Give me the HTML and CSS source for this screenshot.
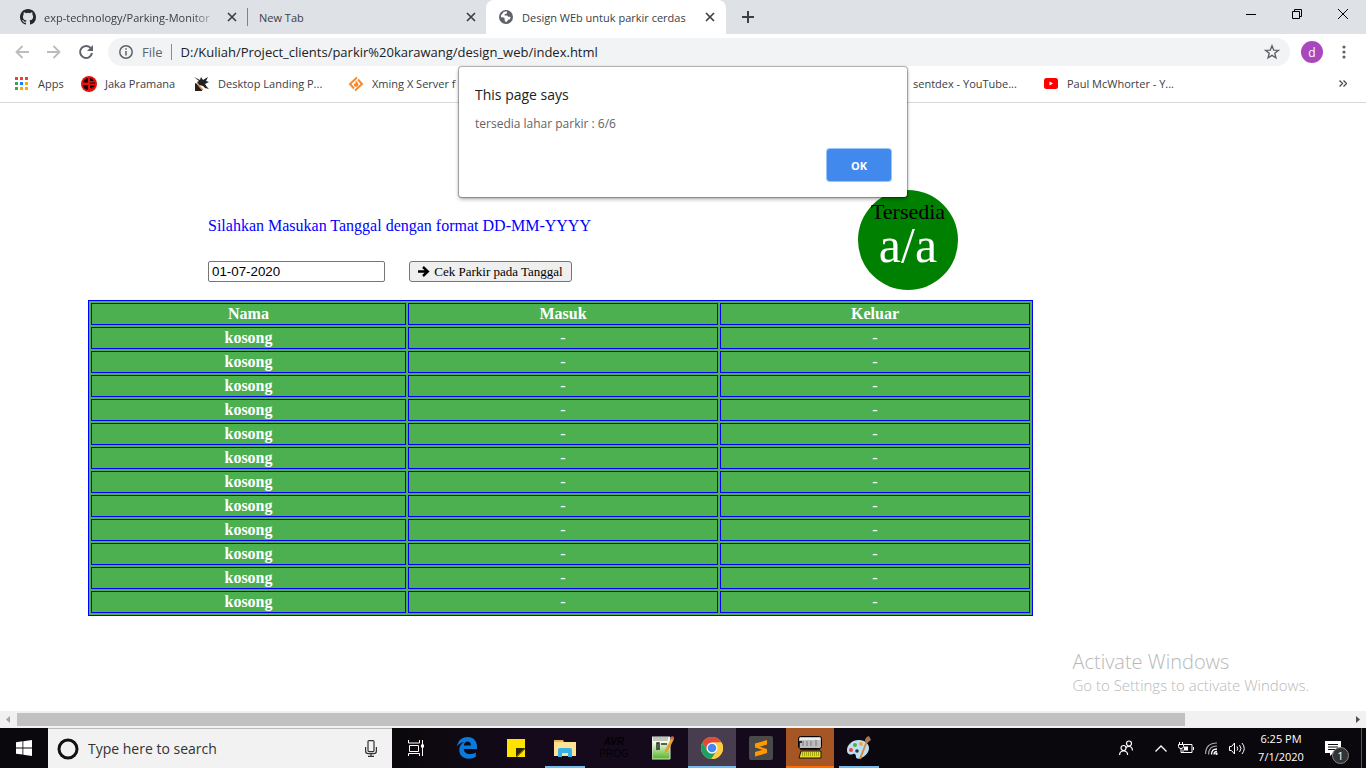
FILE: index.html
```html
<!DOCTYPE html>
<html lang="id">
<head>
<meta charset="utf-8">
<title>Design WEb untuk parkir cerdas</title>
<link rel="stylesheet" href="styles.css">
</head>
<body>
<div class="screen">
  <header class="browser">
    <div class="tabs">
      <div class="tab tab-first">
        <svg width="16" height="16" viewBox="0 0 16 16" fill="#24292e"><path d="M8 0C3.58 0 0 3.58 0 8c0 3.54 2.29 6.53 5.47 7.59.4.07.55-.17.55-.38 0-.19-.01-.82-.01-1.49-2.01.37-2.53-.49-2.69-.94-.09-.23-.48-.94-.82-1.13-.28-.15-.68-.52-.01-.53.63-.01 1.08.58 1.23.82.72 1.21 1.87.87 2.33.66.07-.52.28-.87.51-1.07-1.78-.2-3.64-.89-3.64-3.95 0-.87.31-1.59.82-2.15-.08-.2-.36-1.02.08-2.12 0 0 .67-.21 2.2.82a7.6 7.6 0 0 1 4 0c1.53-1.04 2.2-.82 2.2-.82.44 1.1.16 1.92.08 2.12.51.56.82 1.27.82 2.15 0 3.07-1.87 3.75-3.65 3.95.29.25.54.73.54 1.48 0 1.07-.01 1.93-.01 2.2 0 .21.15.46.55.38A8 8 0 0 0 16 8c0-4.42-3.58-8-8-8z"/></svg>
        <span class="tab-title faded">exp-technology/Parking-Monitor</span>
        <button class="tab-close" aria-label="Close tab"><svg width="10" height="10" viewBox="0 0 10 10"><path d="M1 1l8 8M9 1l-8 8" stroke="#3c4043" stroke-width="1.7"/></svg></button>
      </div>
      <div class="tab tab-second">
        <span class="tab-title">New Tab</span>
        <button class="tab-close" aria-label="Close tab"><svg width="10" height="10" viewBox="0 0 10 10"><path d="M1 1l8 8M9 1l-8 8" stroke="#3c4043" stroke-width="1.7"/></svg></button>
      </div>
      <div class="tab tab-active">
        <svg width="16" height="16" viewBox="0 0 16 16"><circle cx="8" cy="8" r="7" fill="#5f6368"/><path d="M5 2.4l3.600-.9.8 1.300-.9 1.600-1.900.5-.4 1.500h3.200l1 1.500 2.300.2.8 1-1.300 2.200-1.700.3-1.300 2-1.800 1 -.3-1.600-1-1.100.5-1.700-2.300-1.500-2.400-.1.100-2 2.300-2.900z" fill="#fff" transform="translate(1.300 1) scale(.84)"/></svg>
        <span class="tab-title">Design WEb untuk parkir cerdas</span>
        <button class="tab-close" aria-label="Close tab"><svg width="10" height="10" viewBox="0 0 10 10"><path d="M1 1l8 8M9 1l-8 8" stroke="#3c4043" stroke-width="1.7"/></svg></button>
      </div>
      <button class="new-tab" aria-label="New tab"><svg width="12" height="12" viewBox="0 0 12 12"><path d="M6 0v12M0 6h12" stroke="#3c4043" stroke-width="2"/></svg></button>
      <div class="window-buttons">
        <button aria-label="Minimize"><svg width="10" height="10" viewBox="0 0 10 10"><path d="M0 5.500h10" stroke="#000"/></svg></button>
        <button aria-label="Restore"><svg width="10" height="10" viewBox="0 0 10 10"><path d="M.5 2.500h7v7h-7zM2.500 2.500v-2h7v7h-2" fill="none" stroke="#000"/></svg></button>
        <button aria-label="Close"><svg width="10" height="10" viewBox="0 0 10 10"><path d="M0 0l10 10M10 0L0 10" stroke="#000"/></svg></button>
      </div>
    </div>
    <div class="toolbar">
      <button class="nav" aria-label="Back"><svg width="14" height="14" viewBox="0 0 14 14" fill="none" stroke="#babcbe" stroke-width="1.800"><path d="M14 7H1.500M7.500 1l-6 6 6 6"/></svg></button>
      <button class="nav" aria-label="Forward"><svg width="14" height="14" viewBox="0 0 14 14" fill="none" stroke="#babcbe" stroke-width="1.800"><path d="M0 7h12.500M6.500 1l6 6-6 6"/></svg></button>
      <button class="nav" aria-label="Reload"><svg width="16" height="16" viewBox="0 0 16 16"><path d="M13 4.500A6 6 0 1 0 14 9" fill="none" stroke="#5f6368" stroke-width="2"/><path d="M15 1v6H9z" fill="#5f6368"/></svg></button>
      <div class="omnibox">
        <svg width="14" height="14" viewBox="0 0 14 14"><circle cx="7" cy="7" r="6.200" fill="none" stroke="#5f6368" stroke-width="1.500"/><path d="M7 6v4.500M7 3.300v1.500" stroke="#5f6368" stroke-width="1.500"/></svg>
        <label class="scheme" for="address">File</label>
        <input id="address" class="address" type="text" value="D:/Kuliah/Project_clients/parkir%20karawang/design_web/index.html">
        <button class="star" aria-label="Bookmark"><svg width="16" height="16" viewBox="0 0 16 16"><path d="M8 1.800l1.700 4.300 4.600.3-3.500 2.900 1.100 4.500L8 11.300l-3.900 2.500 1.100-4.500L1.700 6.400l4.600-.3z" fill="none" stroke="#5f6368" stroke-width="1.400"/></svg></button>
      </div>
      <button class="avatar">d</button>
      <button class="menu" aria-label="Menu"><svg width="4" height="14" viewBox="0 0 4 14" fill="#5f6368"><circle cx="2" cy="2" r="1.600"/><circle cx="2" cy="7" r="1.600"/><circle cx="2" cy="12" r="1.600"/></svg></button>
    </div>
    <nav class="bookmarks">
      <a href="#apps" class="apps"><svg width="13" height="13" viewBox="0 0 13 13"><path d="M0 0h3v3H0zM5 0h3v3H5zM10 0h3v3h-3z" fill="#ea4335"/><path d="M0 5h3v3H0z" fill="#34a853"/><path d="M5 5h3v3H5z" fill="#1a80f0"/><path d="M10 5h3v3h-3zM5 10h3v3H5zM10 10h3v3h-3z" fill="#fbab05"/><path d="M0 10h3v3H0z" fill="#34a853"/></svg>Apps</a>
      <a href="#jaka"><svg width="16" height="16" viewBox="0 0 16 16"><circle cx="8" cy="8" r="8" fill="#e3120f"/><path d="M7 2v4.500H2.200A6 6 0 0 1 7 2zM9 2a6 6 0 0 1 4 3H9zM2 9h5v5a6 6 0 0 1-5-5zM9 9.500h3v2.500H9zM9 6.500h5v1H9zM10 13q3-1 4-4h-1z" fill="#160000"/></svg>Jaka Pramana</a>
      <a href="#desktop"><svg width="16" height="16" viewBox="0 0 16 16"><path d="M0 1l6 3 1-3 2 3 5-3-2 4 3 1-4 2 2 3 2 2-4-1-2-2-4-1-2-3 2-1z" fill="#202124"/><path d="M1 7l2 1 5 6v1H1z" fill="#202124"/><path d="M3 7l3 4 3 3" fill="none" stroke="#f08a24" stroke-width="1.400"/></svg>Desktop Landing P...</a>
      <a href="#xming"><svg width="16" height="16" viewBox="0 0 16 16"><path d="M9 1.500L2 8l4 4.500M7 14.500L14 8l-4-4.500" fill="none" stroke="#f68b2c" stroke-width="2"/><path d="M8 4.500l1.800 2.500A2.400 2.400 0 0 1 8 11a2.400 2.400 0 0 1-2-3.500L7 8z" fill="#f68b2c"/></svg>Xming X Server f</a>
      <a href="#sentdex">sentdex - YouTube...</a>
      <a href="#paul" class="paul"><svg width="14" height="11" viewBox="0 0 14 11"><rect width="14" height="11" rx="2.500" fill="red"/><path d="M5.500 3.500v4l3.500-2z" fill="#fff"/></svg>Paul McWhorter - Y...</a>
      <button class="more" aria-label="More bookmarks"><svg width="8" height="7" viewBox="0 0 8 7"><path d="M.5.5l3 3-3 3M4.500.5l3 3-3 3" fill="none" stroke="#4b4f53" stroke-width="1.400"/></svg></button>
    </nav>
  </header>

  <main class="page">
    <section class="intro">
      <form class="date-form">
        <label for="tanggal">Silahkan Masukan Tanggal dengan format DD-MM-YYYY</label>
        <div class="date-row">
          <input id="tanggal" class="date-input" type="text" value="01-07-2020">
          <button class="check-button" type="button"><svg width="12" height="11" viewBox="0 0 12 11"><path d="M0 5.500h9.500M5 1l4.800 4.500L5 10" fill="none" stroke="#000" stroke-width="2.400"/></svg>Cek Parkir pada Tanggal</button>
        </div>
      </form>
      <div class="available"><span>Tersedia</span><strong>a/a</strong></div>
    </section>
    <table class="slots" border="1">
      <thead><tr><th class="name">Nama</th><th>Masuk</th><th>Keluar</th></tr></thead>
      <tbody>
        <tr><th>kosong</th><td>-</td><td>-</td></tr>
        <tr><th>kosong</th><td>-</td><td>-</td></tr>
        <tr><th>kosong</th><td>-</td><td>-</td></tr>
        <tr><th>kosong</th><td>-</td><td>-</td></tr>
        <tr><th>kosong</th><td>-</td><td>-</td></tr>
        <tr><th>kosong</th><td>-</td><td>-</td></tr>
        <tr><th>kosong</th><td>-</td><td>-</td></tr>
        <tr><th>kosong</th><td>-</td><td>-</td></tr>
        <tr><th>kosong</th><td>-</td><td>-</td></tr>
        <tr><th>kosong</th><td>-</td><td>-</td></tr>
        <tr><th>kosong</th><td>-</td><td>-</td></tr>
        <tr><th>kosong</th><td>-</td><td>-</td></tr>
      </tbody>
    </table>
    <aside class="watermark"><div class="watermark-title">Activate Windows</div><div>Go to Settings to activate Windows.</div></aside>
  </main>

  <div class="scrollbar">
    <svg width="17" height="17" viewBox="0 0 17 17"><path d="M10 5v7L6 8.500z" fill="#a3a3a3"/></svg>
    <div class="track"><div class="thumb"></div></div>
    <svg width="17" height="17" viewBox="0 0 17 17"><path d="M7 5v7l4-3.500z" fill="#505050"/></svg>
  </div>

  <footer class="taskbar">
    <button class="task" aria-label="Start"><svg width="16" height="16" viewBox="0 0 16 16" fill="#fff"><path d="M0 2.200l6.500-.9v6.200H0zM7.300 1.200L16 0v7.500H7.300zM0 8.400h6.500v6.200L0 13.700zM7.300 8.400H16V16l-8.700-1.200z"/></svg></button>
    <div class="search">
      <svg width="22" height="22" viewBox="0 0 22 22"><circle cx="11" cy="11" r="9" fill="none" stroke="#111" stroke-width="3"/></svg>
      <input type="text" aria-label="Search" placeholder="Type here to search">
      <svg width="12" height="17" viewBox="0 0 12 17" fill="none" stroke="#333" stroke-width="1.200"><rect x="3" y=".6" width="6" height="11" rx="1"/><path d="M.6 7v4q0 2.600 2.600 2.600h5.600q2.600 0 2.600-2.600V7M6 13.600v2.800M3 16.400h6"/></svg>
    </div>
    <div class="tasks">
      <button class="task task-view" aria-label="Task view"><svg width="16" height="16" viewBox="0 0 16 16" fill="none" stroke="#fff"><path d="M.5 0v3h11V0M1.500 5.500h9v6h-9zM.5 16v-2.500h11V16M14.500 0v16"/><path d="M13 4.500h3v3h-3z" fill="#fff" stroke="none"/></svg></button>
      <button class="task" aria-label="Edge"><svg width="20" height="22" viewBox="0 0 20 22"><path d="M0 9.500C1 3.500 5 0 10.500 0 16.500 0 20 4.200 20 9.500V12H6.800c.2 3.500 3 5.100 6 5.100 2.200 0 4.200-.6 6-1.700v4.400C17 21 14.500 21.700 11.800 21.700 6 21.700 2.300 18 2.300 13c0-3.500 1.700-6.300 4.800-8C4 5.500 1.600 7 0 9.500zM6.900 8.400h7c0-2.400-1.200-3.900-3.400-3.900S7.300 6 6.900 8.400z" fill="#0a7bdc"/></svg></button>
      <button class="task" aria-label="Sticky Notes"><svg width="18" height="18" viewBox="0 0 18 18"><path d="M0 0h18v9L9.500 18H0z" fill="#ffe300"/><path d="M9 18V9h9z" fill="#2c2608"/><path d="M18 10v8h-8z" fill="#ffe300"/></svg></button>
      <button class="task running" aria-label="File Explorer"><svg width="22" height="18" viewBox="0 0 22 18"><path d="M0 1h9l1 2h12v14H0z" fill="#eab64e"/><path d="M0 3h22v14H0z" fill="#ffe294"/><path d="M4 18v-7q0-2 2-2h10q2 0 2 2v7h-4v-4H8v4z" fill="#35b3e9"/></svg></button>
      <button class="task avr" aria-label="AVR PROG"><b>AVR</b><span>PROG</span></button>
      <button class="task" aria-label="Notepad"><svg width="22" height="24" viewBox="0 0 22 24"><defs><linearGradient id="pad" x2="0" y2="1"><stop offset=".25" stop-color="#f4f8ef"/><stop offset="1" stop-color="#50b820"/></linearGradient></defs><path d="M0 1h18v22H0z" fill="url(#pad)" stroke="#dfe6dc"/><path d="M1 2h15M1 4h15" stroke="#8b9688"/><path d="M5 14V7h2v7M9 8h6" fill="none" stroke="#243020" stroke-width="1.500"/><path d="M20 1L13 14l-1 4 4-3 6-12z" fill="#e5a329"/><path d="M18 2l2-2 2 1v3z" fill="#d4604a"/></svg></button>
      <button class="task current" aria-label="Chrome"><svg width="22" height="22" viewBox="0 0 22 22"><circle cx="11" cy="11" r="11" fill="#fbcb43"/><path d="M1.500 5.500A11 11 0 0 1 20.500 5.500H11L6.200 13.800z" fill="#df4a3c"/><path d="M1.500 5.500A11 11 0 0 0 10.400 22L15.800 13.700 11 16.500 6.200 13.700z" fill="#1da160"/><path d="M20.500 5.500H11a5.500 5.500 0 0 1 4.800 8.200L10.400 22A11 11 0 0 0 20.500 5.500z" fill="#fbcb43"/><circle cx="11" cy="11" r="5.500" fill="#fff"/><circle cx="11" cy="11" r="4.300" fill="#4688f1"/></svg></button>
      <button class="task" aria-label="Sublime Text"><svg width="24" height="24" viewBox="0 0 24 24"><rect width="24" height="24" rx="2" fill="#494949"/><path d="M6 7.500L18 4v4.500l-7.500 2.300L18 13v4L6 20.500V16l7.500-2.300L6 11.500z" fill="#ff9800"/></svg></button>
      <button class="task alert" aria-label="Downloader"><svg width="24" height="24" viewBox="0 0 24 24"><rect x=".5" y=".5" width="23" height="12" rx="2" fill="#bdbdbd" stroke="#000"/><path d="M2 3h20" stroke="#eee" stroke-width="2"/><path d="M5 5v5M9 5v5M13 5v5M18 4v6" stroke="#777"/><path d="M1 11V6h3M2 13h20" fill="none" stroke="#000" stroke-width="1.500"/><path d="M3 15h20v7H1z" fill="#e5df20" stroke="#111"/><path d="M4 17h17M4 19h17" stroke="#6b6800" stroke-dasharray="1 1"/></svg></button>
      <button class="task running" aria-label="Paint"><svg width="24" height="24" viewBox="0 0 24 24"><path d="M12 4C5 4 0 9 0 14s4 5 6 4 3 1 3 3 3 2 5 1c5-2 8-6 8-10s-4-8-10-8z" fill="#bfe0f3"/><circle cx="4" cy="14" r="2" fill="#e9453b"/><circle cx="8" cy="9" r="2" fill="#58ad43"/><circle cx="14" cy="8" r="2" fill="#f3a43a"/><circle cx="10" cy="15" r="1.800" fill="#253b50"/><path d="M20 5l-7 18" stroke="#d58a42" stroke-width="2"/><path d="M18 5q0-4 4-5l2 4-4 3z" fill="#a87555"/></svg></button>
    </div>
    <div class="tray">
      <svg width="14" height="16" viewBox="0 0 14 16" fill="none" stroke="#fff" stroke-width="1.200"><circle cx="10" cy="3.500" r="2.500"/><circle cx="4.500" cy="8" r="2.500"/><path d="M.6 15q0-4 4-4t4 4M7 7.500q1-1 3-1 3.400 0 3.400 4"/></svg>
      <svg width="12" height="7" viewBox="0 0 12 7" fill="none" stroke="#fff" stroke-width="1.300"><path d="M.5 6.500L6 1l5.500 5.500"/></svg>
      <svg width="16" height="12" viewBox="0 0 16 12" fill="none" stroke="#fff"><path d="M5.500 2.500h8.500v8h-9v-3M15.500 5v3M1.500 0v2M4.500 0v2M.5 2.500h5v2q0 2-2.500 2t-2.500-2zM3 6v4.500h2"/><path d="M6 4.500h4v4H6z" fill="#fff" stroke="none"/></svg>
      <svg width="13" height="13" viewBox="0 0 13 13" fill="none"><path d="M.6 12Q.6 1 12 1M3.600 12.500Q3.600 4 12 4" stroke="#aaa" stroke-width="1.200"/><path d="M6.500 12.500Q6.500 7 12 7M9 12.500q0-3 3-3" stroke="#fff" stroke-width="1.300"/><circle cx="11.500" cy="11.800" r="1.200" fill="#fff"/></svg>
      <svg width="17" height="13" viewBox="0 0 17 13" fill="none" stroke="#fff"><path d="M.5 4.500h2l3-3.500v11l-3-3.500h-2zM8 4.500q1.500 2 0 4M10.500 3q3 3.500 0 7M13 1q4.500 5.500 0 11"/></svg>
      <div class="clock"><span>6:25 PM</span><span>7/1/2020</span></div>
      <button class="notice" aria-label="Notifications"><svg width="16" height="15" viewBox="0 0 16 15"><path d="M0 0h16v12H8l-3 3v-3H0z" fill="#fff"/><path d="M3 3.500h10M3 6h10M3 8.500h8" stroke="#0a0a0a"/></svg><span class="badge">1</span></button>
    </div>
  </footer>

  <section class="dialog" role="dialog" aria-labelledby="dialog-title">
    <h2 id="dialog-title">This page says</h2>
    <p>tersedia lahar parkir : 6/6</p>
    <button class="ok">OK</button>
  </section>
</div>
</body>
</html>
```

FILE: styles.css
```css
* { box-sizing: border-box; }
body { margin: 0; background: #fff; }
svg { display: block; flex: none; }
button { font: inherit; color: inherit; }

.screen {
  position: relative;
  display: flex;
  flex-direction: column;
  min-height: calc(100vh - 2px);
  margin: 0 2px 2px 0;
  font-family: "Open Sans", "Noto Sans", sans-serif;
  font-size: 11px;
  color: #3c4043;
}

/* Browser chrome */
.browser button, .taskbar button {
  display: flex;
  align-items: center;
  justify-content: center;
  padding: 0;
  border: 0;
  background: none;
}
.browser { border-bottom: 1px solid #d9dadc; }
.tabs { display: flex; height: 34px; background: #dee1e6; }
.tab { display: flex; flex: none; align-items: center; }
.tab-title { flex: 1; min-width: 0; overflow: hidden; white-space: nowrap; }
.tab-first { width: 248px; margin: 8px 0; padding: 0 10px 0 20px; border-right: 1px solid #808387; }
.tab-first .tab-title { margin-left: 8px; }
.faded { -webkit-mask-image: linear-gradient(to right, #000 85%, transparent); mask-image: linear-gradient(to right, #000 85%, transparent); }
.tab-first .tab-close { margin-left: 9px; }
.tab-second { width: 238px; padding: 0 10px 0 11px; }
.tab-active {
  width: 240px;
  padding: 0 11px 0 12px;
  border-radius: 8px 8px 0 0;
  background: #fff;
}
.tab-active .tab-title { margin-left: 8px; }
.new-tab { width: 44px; }
.window-buttons { display: flex; height: 28px; margin-left: auto; }
.window-buttons button { width: 46px; }

.toolbar { display: flex; align-items: center; height: 36px; padding: 0 11px 0 6px; }
.nav { width: 32px; height: 32px; }
.omnibox {
  display: flex;
  flex: 1;
  align-items: center;
  height: 28px;
  margin-left: 6px;
  padding: 0 10px 0 11px;
  border-radius: 14px;
  background: #f1f3f4;
  font-size: 13px;
}
.scheme { margin-left: 9px; padding-right: 8px; border-right: 1px solid #888c90; color: #5f6368; line-height: 16px; }
.address { flex: 1; min-width: 0; padding: 0 0 0 9px; border: 0; background: none; font: inherit; color: #202124; }
.browser .avatar { width: 22px; height: 22px; margin-left: 11px; border-radius: 50%; background: #ab47bc; color: #fff; font-size: 12px; }
.menu { width: 22px; height: 22px; margin-left: 10px; }

.bookmarks {
  display: grid;
  grid-template-columns: 66px 113px 154px 565px 131px 1fr auto;
  align-items: center;
  height: 32px;
  padding: 0 19px 5px 15px;
}
.bookmarks a { display: flex; align-items: center; gap: 8px; color: inherit; text-decoration: none; white-space: nowrap; }
.bookmarks .apps { gap: 10px; }
.bookmarks .paul { gap: 9px; }

/* Parking page */
.page {
  position: relative;
  flex: 1;
  padding: 87px 333px 95px 88px;
  font-family: "Liberation Serif", serif;
  font-size: 16px;
  color: #000;
}
.intro { display: flex; justify-content: space-between; padding: 0 75px 10px 120px; }
.date-form { padding-top: 27px; color: #00f; }
.date-form label { display: block; line-height: 18px; }
.date-row { display: flex; gap: 24px; margin-top: 26px; }
.date-input {
  width: 177px;
  height: 21px;
  padding: 1px 3px;
  border: 1px solid #767676;
  border-radius: 2px;
  font-family: "Liberation Sans", sans-serif;
}
.check-button {
  display: flex;
  align-items: center;
  justify-content: center;
  gap: 4px;
  width: 163px;
  height: 21px;
  padding: 0;
  border: 1px solid #767676;
  border-radius: 3px;
  background: #efefef;
  color: #000;
  font-size: 13px;
}
.available {
  display: flex;
  flex-direction: column;
  align-items: center;
  width: 100px;
  height: 100px;
  padding-top: 10px;
  border-radius: 50%;
  background: #008000;
  font-size: 22px;
  line-height: 24px;
}
.available strong { color: #fff; font-size: 50px; font-weight: normal; line-height: 42px; }

.slots {
  width: 100%;
  table-layout: fixed;
  border: 1px solid #00f;
  border-spacing: 2px;
  background: #4caf50;
  color: #fff;
  line-height: 18px;
  text-align: center;
}
.slots th, .slots td { padding: 1px; border: 1px solid #00f; }
.slots .name { width: 315px; }

.watermark {
  position: absolute;
  right: 57px;
  bottom: 16px;
  color: #b8b8b8;
  font-family: "Open Sans", "Noto Sans", sans-serif;
  font-size: 15px;
  font-weight: 300;
  line-height: 20px;
}
.watermark-title { font-size: 20px; line-height: 26px; }

.scrollbar { display: flex; height: 17px; background: #f1f1f1; }
.track { flex: 1; padding: 2px 0; }
.thumb { width: calc(88% - 4px); height: 13px; background: #c1c1c1; }

/* Taskbar */
.taskbar { display: flex; height: 40px; background: #0a070d; color: #fff; }
.taskbar .task { width: 48px; height: 40px; }
.search {
  display: flex;
  align-items: center;
  gap: 9px;
  width: 344px;
  padding: 0 15px 0 9px;
  border-top: 1px solid #bbb;
  background: #f2f2f2;
}
.search input { flex: 1; min-width: 0; padding: 0; border: 0; background: none; font: inherit; font-size: 14px; }
.search input::placeholder { color: #333; opacity: 1; }
.tasks { display: flex; gap: 1px; background: linear-gradient(to right, #0a080b, #150a1c 30%, #150a1c 80%, #0a070d); }
.tasks .task-view { margin-right: 2px; }
.taskbar .running { background: linear-gradient(#76b9ed, #76b9ed) center bottom / 40px 2px no-repeat; }
.taskbar .current { background: #483d4f; box-shadow: inset 0 -2px #76b9ed; }
.taskbar .alert { background: #a65624; box-shadow: inset 0 -2px #ff6d00; }
.taskbar .avr { flex-direction: column; color: #020202; font-family: "Liberation Sans", sans-serif; font-size: 10px; line-height: 12px; }
.avr b { font-style: italic; }
.tray { display: flex; align-items: center; margin-left: auto; padding-right: 4px; }
.tray > svg { margin-right: 11px; }
.tray > svg:first-child { margin-right: 22px; }
.clock { display: flex; flex-direction: column; align-items: center; width: 48px; font-size: 11px; line-height: 18px; }
.taskbar .notice { position: relative; justify-content: flex-start; width: 57px; height: 40px; padding-left: 20px; border-right: 1px solid #555; }
.badge {
  position: absolute;
  left: 27px;
  bottom: 4px;
  width: 17px;
  height: 17px;
  border: 1px solid #888;
  border-radius: 50%;
  background: #333;
  font-size: 11px;
  line-height: 15px;
}

/* Alert box */
.dialog {
  position: absolute;
  top: 67px;
  left: 50%;
  display: flex;
  flex-direction: column;
  width: 448px;
  transform: translateX(-50%);
  padding: 17px 16px 16px;
  border-radius: 3px;
  background: #fff;
  box-shadow: 0 0 1px 1px rgba(0, 0, 0, .3), 0 2px 4px rgba(0, 0, 0, .35);
}
.dialog h2 { margin: 0; color: #202124; font-size: 14px; font-weight: normal; line-height: 22px; }
.dialog p { margin: 8px 0 15px; color: #5f6368; font-size: 12px; line-height: 20px; }
.ok {
  align-self: flex-end;
  width: 64px;
  height: 32px;
  border: 0;
  border-radius: 3px;
  background: #4189ec;
  box-shadow: 0 0 0 1px #9cc3f8;
  color: #fff;
  font-size: 11px;
  font-weight: bold;
}
```
